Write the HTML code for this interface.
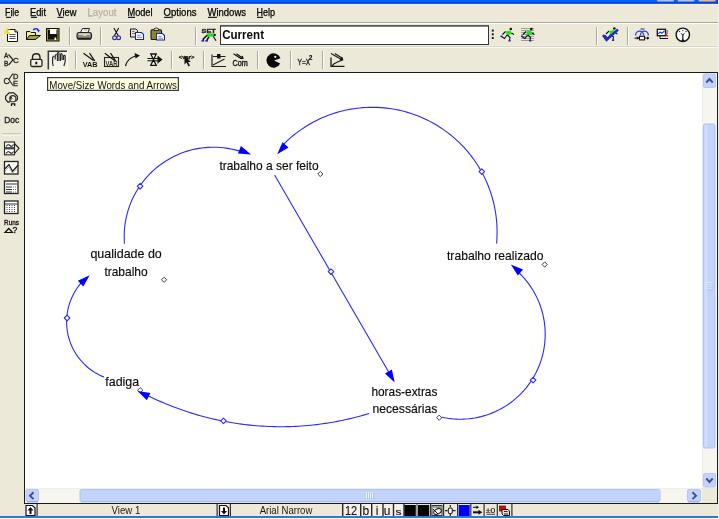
<!DOCTYPE html>
<html><head><meta charset="utf-8">
<style>
*{margin:0;padding:0;box-sizing:border-box}
html,body{width:719px;height:519px;overflow:hidden;background:#ece9d8;font-family:"Liberation Sans",sans-serif}
.a{position:absolute}
svg{position:absolute;left:0;top:0}
</style></head><body>
<svg style="will-change:transform" width="719" height="519" viewBox="0 0 719 519" font-family="Liberation Sans, sans-serif">
<rect x="0" y="0" width="719" height="519" fill="#ece9d8"/>
<!-- title bar remnant -->
<rect x="0" y="0" width="719" height="2" fill="#0062fc"/>
<rect x="0" y="2" width="719" height="1" fill="#0048dc"/>
<rect x="0" y="3" width="719" height="1" fill="#2a5ad0"/>
<rect x="0" y="4" width="719" height="1" fill="#f2efe2"/>
<rect x="657" y="0" width="17" height="1.6" rx="0.8" fill="#b3c2ea"/>
<rect x="677.5" y="0" width="17" height="1.6" rx="0.8" fill="#b3c2ea"/>
<rect x="698.5" y="0" width="17" height="1.6" rx="0.8" fill="#f0b090"/>
<!-- menu -->
<g font-size="10.2" fill="#000" stroke="#000" stroke-width="0.25">
<text x="5" y="16" textLength="14.2" lengthAdjust="spacingAndGlyphs">File</text>
<text x="30" y="16" textLength="16" lengthAdjust="spacingAndGlyphs">Edit</text>
<text x="56.5" y="16" textLength="20" lengthAdjust="spacingAndGlyphs">View</text>
<text x="87.5" y="16" textLength="29" lengthAdjust="spacingAndGlyphs" fill="#aca899" stroke="#c4c0b0">Layout</text>
<text x="127.5" y="16" textLength="25" lengthAdjust="spacingAndGlyphs">Model</text>
<text x="163.5" y="16" textLength="33" lengthAdjust="spacingAndGlyphs">Options</text>
<text x="207.5" y="16" textLength="38.5" lengthAdjust="spacingAndGlyphs">Windows</text>
<text x="256.5" y="16" textLength="18.5" lengthAdjust="spacingAndGlyphs">Help</text>
</g>
<g fill="#222">
<rect x="6" y="16.8" width="5" height="1.2"/><rect x="31" y="16.8" width="6" height="1.2"/><rect x="57.5" y="16.8" width="6" height="1.2"/>
<rect x="128" y="16.8" width="7" height="1.2"/><rect x="164" y="16.8" width="7" height="1.2"/><rect x="208" y="16.8" width="9" height="1.2"/><rect x="257" y="16.8" width="6" height="1.2"/>
</g>
<rect x="88" y="16" width="5" height="1" fill="#c8c4b4"/>
<rect x="0" y="22" width="719" height="1" fill="#aca899"/>
<rect x="0" y="23" width="719" height="1" fill="#fff"/>
<rect x="0" y="47" width="719" height="1" fill="#fbfaf4"/>
<rect x="0" y="46" width="719" height="1" fill="#d6d3c4"/>
<rect x="0" y="45" width="719" height="1" fill="#f0eee2"/>
<rect x="69" y="27" width="1" height="18" fill="#aca899"/><rect x="70" y="27" width="1" height="18" fill="#fff"/>
<rect x="100" y="27" width="1" height="18" fill="#aca899"/><rect x="101" y="27" width="1" height="18" fill="#fff"/>
<rect x="195" y="27" width="1" height="18" fill="#aca899"/><rect x="196" y="27" width="1" height="18" fill="#fff"/>
<rect x="596" y="27" width="1" height="18" fill="#aca899"/><rect x="597" y="27" width="1" height="18" fill="#fff"/>
<rect x="627" y="27" width="1" height="18" fill="#aca899"/><rect x="628" y="27" width="1" height="18" fill="#fff"/>
<!-- Current box -->
<rect x="220" y="25" width="269" height="20" fill="#333"/>
<rect x="221" y="26.6" width="267" height="17.4" fill="#fff"/>
<rect x="220" y="25" width="269" height="1" fill="#5a5a55"/>
<text x="222.2" y="38.8" font-size="12" font-weight="bold" fill="#0a0a0a" textLength="41.8" lengthAdjust="spacingAndGlyphs">Current</text>
<path d="M7.5,29.5 H15 L17.5,32 V41.5 H7.5 Z" fill="#fff" stroke="#111" stroke-width="1"/>
<path d="M15,29.5 V32 H17.5" fill="#ddd" stroke="#111" stroke-width="1"/>
<path d="M9.5,34.5 H15.5 M9.5,36.5 H15.5 M9.5,38.5 H15.5" stroke="#555" stroke-width="1"/>
<path d="M4.5,30.5 L10,33.5 M7,28.5 L7.5,34 M4.5,33.5 L9.5,29.5" stroke="#e8e020" stroke-width="1.3"/>
<path d="M26.5,31.5 H30 L31,32.5 H35.5 V39.5 H26.5 Z" fill="#f4ee7a" stroke="#111" stroke-width="1"/>
<path d="M26.5,39.5 L29.5,35.5 H40.5 L35.5,39.5 Z" fill="#a8a030" stroke="#111" stroke-width="1"/>
<path d="M33,30 Q36,27.5 38.5,30" fill="none" stroke="#1030ff" stroke-width="1.3"/><path d="M37,30 L40,30 L38.5,32.5 Z" fill="#1030ff"/>
<rect x="46.5" y="28.5" width="12.5" height="12.5" fill="#111" stroke="#111" stroke-width="1"/>
<rect x="47.5" y="29.5" width="10.5" height="10.5" fill="none" stroke="#a09a28" stroke-width="1"/>
<rect x="50" y="29" width="6.5" height="5" fill="#fff"/>
<rect x="54.5" y="37.5" width="1.7" height="2.5" fill="#fff"/>
<path d="M80.5,32.5 L82.5,28.5 H89.5 L88,32.5 Z" fill="#fafafa" stroke="#222" stroke-width="1"/>
<path d="M84,30 H87.5" stroke="#999" stroke-width="0.8"/>
<rect x="77" y="32.5" width="14.5" height="6.5" rx="2.2" fill="#8a8a8a" stroke="#222" stroke-width="1.1"/>
<rect x="78.5" y="33.3" width="11.5" height="1.6" fill="#d8d8d8"/>
<rect x="83" y="34.8" width="3.5" height="1.2" fill="#f0e040"/>
<rect x="77.5" y="37.8" width="13.5" height="1.8" fill="#1a1a1a"/>
<path d="M113.9,28 L118.2,35.8 M118.7,28 L114.4,35.8" stroke="#111" stroke-width="1.1"/>
<circle cx="114.6" cy="37.8" r="1.9" fill="none" stroke="#3030b0" stroke-width="1.2"/><circle cx="118.6" cy="37.8" r="1.9" fill="none" stroke="#3030b0" stroke-width="1.2"/>
<path d="M130.5,29 H136 L137.5,30.5 V37 H130.5 Z" fill="#e8e8e8" stroke="#111" stroke-width="1"/>
<path d="M132,31.5 H134.5 M132,33.5 H135.5" stroke="#555" stroke-width="0.8"/>
<path d="M135.5,32.5 H141.5 L143.5,34.5 V39.5 H135.5 Z" fill="#fff" stroke="#1c2a90" stroke-width="1.1"/>
<path d="M137.2,35.3 H140.5 M137.2,37.3 H142" stroke="#3a4aa0" stroke-width="0.7"/>
<rect x="151" y="29.8" width="10.5" height="9.7" rx="1" fill="#8c8630" stroke="#1a1a1a" stroke-width="1.1"/>
<path d="M154,30.5 V28.8 Q156.2,27 158.5,28.8 V30.5 Z" fill="#e8e8d8" stroke="#1a1a1a" stroke-width="0.9"/>
<path d="M156.5,33.5 H162.5 L164.5,35.5 V40 H156.5 Z" fill="#fff" stroke="#1c2a90" stroke-width="1.1"/>
<path d="M158.2,36.3 H161.5 M158.2,38.2 H163" stroke="#3a4aa0" stroke-width="0.7"/>
<text x="201.6" y="32.8" font-size="6" font-weight="bold" fill="#222" stroke="#222" stroke-width="0.35" textLength="14.2" lengthAdjust="spacingAndGlyphs">SET</text>
<path d="M206.5,33.8 L212.8,33.2 L213.4,36.6 L207.5,37 Z" fill="#10ee10"/>
<path d="M207.2,35.2 L203.5,38.8 L202.8,40.2 M209,37 L206.8,40" fill="none" stroke="#111" stroke-width="1.5"/>
<path d="M213.2,36.2 L216,40.8" stroke="#111" stroke-width="1.1"/>
<circle cx="214.6" cy="35" r="1.3" fill="#111"/>
<rect x="201.5" y="40" width="2.6" height="1.6" fill="#2020c0"/><rect x="205.3" y="40" width="2.6" height="1.6" fill="#2020c0"/>
<rect x="491.8" y="29.6" width="1.9" height="1.9" fill="#111"/>
<rect x="491.8" y="33.4" width="1.9" height="1.9" fill="#111"/>
<rect x="491.8" y="37.1" width="1.9" height="1.9" fill="#111"/>
<path d="M505.5,31.5 L510.5,30.5 L512,34 L507,35.5 Z" fill="#18e818"/><circle cx="510.8" cy="29" r="1.3" fill="#111"/><path d="M505.5,31.5 L502.5,34.5 M511.5,33 L514,34.5 M507,35 L504.5,38.5 L501.5,36.5 M507.5,35 L510,37.5 L509.5,40.5" fill="none" stroke="#111" stroke-width="1.1"/><rect x="500.5" y="35.5" width="2" height="1.6" fill="#2020c0"/><rect x="508.5" y="40" width="2.2" height="1.5" fill="#2020c0"/>
<rect x="521" y="28" width="13" height="1" fill="#9c9c9c"/>
<rect x="521" y="30" width="13" height="1" fill="#9c9c9c"/>
<rect x="521" y="32" width="13" height="1" fill="#9c9c9c"/>
<rect x="521" y="34" width="13" height="1" fill="#9c9c9c"/>
<rect x="521" y="36" width="13" height="1" fill="#9c9c9c"/>
<rect x="521" y="38" width="13" height="1" fill="#9c9c9c"/>
<rect x="521" y="40" width="13" height="1" fill="#9c9c9c"/>
<path d="M526.0,31.5 L531.0,30.5 L532.5,34 L527.5,35.5 Z" fill="#18e818"/><circle cx="531.3" cy="29" r="1.3" fill="#111"/><path d="M526.0,31.5 L523.0,34.5 M532.0,33 L534.5,34.5 M527.5,35 L525.0,38.5 L522.0,36.5 M528.0,35 L530.5,37.5 L530.0,40.5" fill="none" stroke="#111" stroke-width="1.1"/><rect x="521.0" y="35.5" width="2" height="1.6" fill="#2020c0"/><rect x="529.0" y="40" width="2.2" height="1.5" fill="#2020c0"/>
<path d="M609.0,31.0 L614.0,30.0 L615.5,33.5 L610.5,35.0 Z" fill="#18e818"/><circle cx="614.3" cy="28.5" r="1.3" fill="#111"/><path d="M609.0,31.0 L606.0,34.0 M615.0,32.5 L617.5,34.0 M610.5,34.5 L608.0,38.0 L605.0,36.0 M611.0,34.5 L613.5,37.0 L613.0,40.0" fill="none" stroke="#111" stroke-width="1.1"/><rect x="604.0" y="35.0" width="2" height="1.6" fill="#2020c0"/><rect x="612.0" y="39.5" width="2.2" height="1.5" fill="#2020c0"/>
<path d="M603,35 L606.5,40 L618,29.5" fill="none" stroke="#1c2ad8" stroke-width="2.4"/>
<path d="M635.6,35.5 A4,4.3 0 0 1 643.6,35.5 M640.4,35.5 A4,4.3 0 0 1 648.4,35.5" fill="none" stroke="#2a40e8" stroke-width="1.3"/>
<path d="M640.5,29 H644.5" stroke="#333" stroke-width="1"/>
<rect x="639.5" y="36.3" width="5" height="3.6" fill="#fff" stroke="#111" stroke-width="1.1"/>
<path d="M634.5,38.1 H639.5 M644.5,38.1 H649" stroke="#111" stroke-width="1"/><path d="M636.8,36.4 L639.3,38.1 L636.8,39.8 Z M647,36.4 L649.5,38.1 L647,39.8 Z" fill="#111"/>
<rect x="657.3" y="29.3" width="8.2" height="6.4" fill="#fff" stroke="#111" stroke-width="1.3"/>
<path d="M658.3,33.8 L660,32 L661.8,33.2 L664.5,31" fill="none" stroke="#1a3af0" stroke-width="1.1"/>
<path d="M660,38.5 H668 M660,36 V38.5" stroke="#111" stroke-width="1"/><path d="M665.5,34 L668,36.5" stroke="#e01818" stroke-width="1.3"/><rect x="666.5" y="30.5" width="1.5" height="1" fill="#333"/><rect x="666.5" y="32.5" width="1.5" height="1" fill="#333"/>
<circle cx="682.8" cy="34.8" r="6.7" fill="#fff" stroke="#111" stroke-width="1.4"/>
<path d="M682.8,34 V41" stroke="#111" stroke-width="1.2"/><path d="M681.3,41 L682.8,38.5 L684.3,41 Z" fill="#111"/>
<path d="M681,33 L682.8,35.5 L684.6,33" fill="none" stroke="#444" stroke-width="0.9"/>
<circle cx="679.6" cy="31.6" r="0.7" fill="#111"/><circle cx="682.8" cy="30.6" r="0.7" fill="#111"/><circle cx="686" cy="31.6" r="0.7" fill="#111"/>
<rect x="75" y="51" width="1" height="18" fill="#aca899"/><rect x="76" y="51" width="1" height="18" fill="#fff"/>
<rect x="171" y="51" width="1" height="18" fill="#aca899"/><rect x="172" y="51" width="1" height="18" fill="#fff"/>
<rect x="203" y="51" width="1" height="18" fill="#aca899"/><rect x="204" y="51" width="1" height="18" fill="#fff"/>
<rect x="257" y="51" width="1" height="18" fill="#aca899"/><rect x="258" y="51" width="1" height="18" fill="#fff"/>
<rect x="290" y="51" width="1" height="18" fill="#aca899"/><rect x="291" y="51" width="1" height="18" fill="#fff"/>
<rect x="322" y="51" width="1" height="18" fill="#aca899"/><rect x="323" y="51" width="1" height="18" fill="#fff"/>
<text x="4" y="58.2" font-size="6.5" fill="#222" stroke="#222" stroke-width="0.3">A</text><text x="4" y="66.2" font-size="6.5" fill="#222" stroke="#222" stroke-width="0.3">B</text>
<path d="M8.5,54.5 L13,59.8 L8.5,65" fill="none" stroke="#222" stroke-width="1.2"/>
<text x="13" y="63" font-size="8" fill="#222" stroke="#222" stroke-width="0.3">C</text>
<path d="M32.5,59.5 V57.5 Q32.5,53.8 36.3,53.8 Q40,53.8 40,57.5 V59.5" fill="none" stroke="#222" stroke-width="1.4"/>
<rect x="30.7" y="59.3" width="11.3" height="7.2" rx="1.5" fill="#f4f1e4" stroke="#222" stroke-width="1.3"/>
<rect x="35.3" y="61.8" width="2" height="2.5" fill="#111"/>
<rect x="48" y="51" width="20" height="19" fill="#f3f1e8"/>
<rect x="67.3" y="50.5" width="1" height="20" fill="#fbfaf5"/><rect x="47.5" y="69.5" width="21" height="1" fill="#fbfaf5"/>
<path d="M48.3,69.5 V51.2 H67" fill="none" stroke="#3a3a3a" stroke-width="1.5"/>
<path d="M53.2,66 L52.6,63 V57.5 L54.2,56 M55.2,59.5 V55.5 Q55.8,54.3 56.6,55 M57.4,61 V53.2 Q58.1,52 58.9,52.8 V61 M60.5,61 V54.2 Q61.3,53.1 62.1,54.2 V60 M63.6,60 V55.6 Q64.4,54.6 65.2,56 V61.5 L63.9,66" fill="none" stroke="#222" stroke-width="1.1"/>
<path d="M83.5,53.2 L93.5,60.5 M89.5,53.2 L94.8,61" fill="none" stroke="#111" stroke-width="1.2"/>
<text x="82.8" y="66.6" font-size="7.5" font-weight="bold" fill="#111" textLength="14.8" lengthAdjust="spacingAndGlyphs">VAB</text>
<rect x="104.5" y="57.5" width="14" height="9" fill="none" stroke="#222" stroke-width="1.1"/>
<text x="105.5" y="65.5" font-size="6.5" font-weight="bold" fill="#333" textLength="12" lengthAdjust="spacingAndGlyphs">VAR</text>
<path d="M104.8,53.2 L114.5,60.5 M110.5,53.2 L115.8,61" fill="none" stroke="#111" stroke-width="1.2"/>
<path d="M125.5,66 Q127,58.5 135.5,56" fill="none" stroke="#111" stroke-width="1.3"/><path d="M140,55.6 L134.5,53 L135.5,58.5 Z" fill="#111"/>
<path d="M147.5,58.5 H158 M147.5,60.8 H158" stroke="#111" stroke-width="1"/>
<path d="M150.8,54 H156.2 L153.5,59.6 Z M150.8,65.3 H156.2 L153.5,59.6 Z" fill="#fff" stroke="#111" stroke-width="1.3"/>
<path d="M157.5,55.5 L162.5,59.6 L157.5,63.8 Z" fill="#111"/>
<text x="178.8" y="58.6" font-size="6" font-weight="bold" fill="#111" stroke="#111" stroke-width="0.25" textLength="15.5" lengthAdjust="spacingAndGlyphs">&lt;var&gt;</text>
<path d="M184.5,55.5 L184.5,64.5 L186.5,62.5 L188.5,66.5 L190,65.8 L188,62 L190.8,62 Z" fill="#111"/>
<path d="M212,54.5 V66.5 H226 M213,56.5 H225.5 M213,65 L224.5,59" fill="none" stroke="#222" stroke-width="1.2"/>
<rect x="217" y="54" width="3.5" height="4.5" fill="#111"/>
<path d="M233.5,53.8 L240.5,58.3 M236.5,53.8 L242.5,58 M240,58.5 L243,58.5 L242.3,55.8" fill="none" stroke="#111" stroke-width="1.15"/>
<text x="232.6" y="66" font-size="8.6" fill="#111" stroke="#111" stroke-width="0.35" textLength="15.3" lengthAdjust="spacingAndGlyphs">Com</text>
<path d="M280.5,58.3 A7.2,7.2 0 1 0 280.2,63.5 L274,60.5 Z" fill="#0a0a0a"/>
<circle cx="275.3" cy="56.8" r="1.1" fill="#fff"/>
<text x="297.6" y="64.5" font-size="9" fill="#1a1a1a" stroke="#1a1a1a" stroke-width="0.35" textLength="12.6" lengthAdjust="spacingAndGlyphs">Y=X</text>
<text x="308.8" y="60" font-size="6.5" font-weight="bold" fill="#111" stroke="#111" stroke-width="0.2">2</text>
<path d="M331,57.5 V66.3 H344.5" fill="none" stroke="#1a1a1a" stroke-width="1.3"/>
<path d="M331,53.5 L341.5,59.5 M334.8,53.5 L342.8,58.5 M342.5,60 Q338,61.5 334,63.8 L332.2,66" fill="none" stroke="#1a1a1a" stroke-width="1.2"/>
<path d="M343.5,60.3 L339.3,60.5 L342,56.8 Z" fill="#111"/>
<text x="3.4" y="83.5" font-size="8.5" fill="#222" stroke="#222" stroke-width="0.3">C</text>
<path d="M13,73.5 L8.8,79.5 L13,85.5" fill="none" stroke="#222" stroke-width="1.1"/>
<text x="13" y="79" font-size="7.5" fill="#222" stroke="#222" stroke-width="0.3">D</text><text x="13" y="86.3" font-size="7.5" fill="#222" stroke="#222" stroke-width="0.3">E</text>
<path d="M7.8,102 L5.6,99.4 V96.3 L9.1,92.8 H13.8 L17.4,96.3 V99.4 L15.4,101.2" fill="none" stroke="#222" stroke-width="1.2"/>
<circle cx="12.8" cy="98.7" r="3.1" fill="none" stroke="#333" stroke-width="1.1"/>
<path d="M10,97 L12,96.8 L10.8,100 Z" fill="#111"/><path d="M7,102.8 L9.8,100.8 L9.8,102.8 Z" fill="#111"/>
<path d="M8.5,102 L12.5,98" stroke="#555" stroke-width="0.9"/>
<path d="M11.5,106 V103.8 H14.8 V106" fill="none" stroke="#111" stroke-width="1.2"/>
<text x="4.2" y="123" font-size="9" fill="#222" stroke="#222" stroke-width="0.35" textLength="15" lengthAdjust="spacingAndGlyphs">Doc</text>
<rect x="2.5" y="133.5" width="18.5" height="1" fill="#aca899"/><rect x="2.5" y="134.5" width="18.5" height="1" fill="#fff"/>
<rect x="4.5" y="142" width="10" height="5.8" fill="#fff" stroke="#222" stroke-width="1.1"/><rect x="4.5" y="148.8" width="10" height="6" fill="#fff" stroke="#222" stroke-width="1.1"/>
<path d="M6,146.5 Q8,143.5 10,145.5 T13.5,144.5 M6,153.5 Q8,150.5 10,152.5 T13.5,151.5" fill="none" stroke="#222" stroke-width="1.1"/>
<path d="M14.5,143.5 L19,148.3 L14.5,153.5" fill="none" stroke="#222" stroke-width="1.1"/>
<rect x="4.5" y="161.5" width="13.5" height="12.5" fill="#fff" stroke="#222" stroke-width="1.3"/>
<path d="M5,168.8 L9,164.5 L12.5,171.3 L18,165.3" fill="none" stroke="#222" stroke-width="1.3"/>
<path d="M5,171 L9,167 L12.5,173.3 L17.5,168" fill="none" stroke="#999" stroke-width="0.8"/>
<rect x="4.5" y="181" width="13.5" height="12.5" fill="#fff" stroke="#222" stroke-width="1.3"/>
<path d="M6,184 H17 M6,187 H12 M6,189.5 H12 M6,192 H12" stroke="#333" stroke-width="1"/>
<path d="M13,187 H17 M13,189.5 H17 M13,192 H17" stroke="#666" stroke-width="1" stroke-dasharray="1,1"/>
<rect x="4.5" y="201" width="13.5" height="12.5" fill="#fff" stroke="#222" stroke-width="1.3"/>
<path d="M5,204 H17.5" stroke="#333" stroke-width="1"/>
<path d="M7,205 V213 M9.5,205 V213 M12,205 V213 M14.5,205 V213" stroke="#444" stroke-width="1" stroke-dasharray="1,1"/>
<text x="4" y="225" font-size="7.5" fill="#111" stroke="#111" stroke-width="0.3" textLength="15" lengthAdjust="spacingAndGlyphs">Runs</text>
<path d="M5,232.5 L8.8,228.5 L12.5,232.5 Z" fill="none" stroke="#111" stroke-width="1.2"/>
<text x="12.5" y="233.3" font-size="8.5" fill="#111" stroke="#111" stroke-width="0.3">?</text>
<!-- canvas -->
<rect x="24" y="72" width="694" height="432" fill="#1a1a1a"/>
<rect x="25" y="73" width="692" height="430" fill="#fff"/>
<rect x="702" y="73" width="15" height="415" fill="#f6f5ef"/>
<rect x="702" y="73" width="1" height="415" fill="#eeede5"/>
<rect x="703.5" y="74" width="12" height="13.5" rx="1.5" fill="#c3d3fb" stroke="#b4c6f6" stroke-width="1"/>
<path d="M706.3,82.5 L709.5,79 L712.7,82.5" fill="none" stroke="#3f4f8c" stroke-width="1.9"/>
<rect x="703.5" y="124" width="11.5" height="324" rx="1.5" fill="#c3d4fc" stroke="#b0c4f4" stroke-width="1"/>
<rect x="704.5" y="125" width="3" height="322" fill="#cfdcfd"/>
<rect x="705.5" y="282.5" width="7" height="1" fill="#eef3fe"/><rect x="706.5" y="283.5" width="7" height="0.8" fill="#a0b6f0"/>
<rect x="705.5" y="284.5" width="7" height="1" fill="#eef3fe"/><rect x="706.5" y="285.5" width="7" height="0.8" fill="#a0b6f0"/>
<rect x="705.5" y="286.5" width="7" height="1" fill="#eef3fe"/><rect x="706.5" y="287.5" width="7" height="0.8" fill="#a0b6f0"/>
<rect x="705.5" y="288.5" width="7" height="1" fill="#eef3fe"/><rect x="706.5" y="289.5" width="7" height="0.8" fill="#a0b6f0"/>
<rect x="703.5" y="473.5" width="12" height="13.5" rx="1.5" fill="#c3d3fb" stroke="#b4c6f6" stroke-width="1"/>
<path d="M706.3,478.5 L709.5,482 L712.7,478.5" fill="none" stroke="#3f4f8c" stroke-width="1.9"/>
<rect x="25" y="488" width="677" height="15" fill="#f6f5ef"/>
<rect x="25" y="488" width="677" height="1" fill="#f0efe6"/>
<rect x="26" y="489.5" width="12.5" height="12" rx="1.5" fill="#c3d3fb" stroke="#b4c6f6" stroke-width="1"/>
<rect x="27" y="501.2" width="11" height="1.2" fill="#90a8e8"/>
<path d="M33.5,492.3 L30,495.7 L33.5,499.1" fill="none" stroke="#3f4f8c" stroke-width="1.9"/>
<rect x="80" y="489.5" width="580" height="12" rx="1.5" fill="#c3d4fc" stroke="#b0c4f4" stroke-width="1"/>
<rect x="81" y="501.2" width="578" height="1.2" fill="#a8bcf0"/>
<rect x="366" y="492.5" width="1" height="6" fill="#eef3fe"/><rect x="367" y="493" width="0.8" height="6" fill="#a8bcf2"/>
<rect x="368" y="492.5" width="1" height="6" fill="#eef3fe"/><rect x="369" y="493" width="0.8" height="6" fill="#a8bcf2"/>
<rect x="370" y="492.5" width="1" height="6" fill="#eef3fe"/><rect x="371" y="493" width="0.8" height="6" fill="#a8bcf2"/>
<rect x="372" y="492.5" width="1" height="6" fill="#eef3fe"/><rect x="373" y="493" width="0.8" height="6" fill="#a8bcf2"/>
<rect x="687.5" y="489.5" width="13" height="12" rx="1.5" fill="#c3d3fb" stroke="#b4c6f6" stroke-width="1"/>
<rect x="688.5" y="501.2" width="11" height="1.2" fill="#90a8e8"/>
<path d="M692.5,492.3 L696,495.7 L692.5,499.1" fill="none" stroke="#3f4f8c" stroke-width="1.9"/>
<rect x="702" y="488" width="15" height="15" fill="#ece9d8"/>
<!-- tooltip -->
<rect x="47.6" y="77.6" width="130.8" height="12.8" fill="#ffffe1" stroke="#3a3a3a" stroke-width="1.2"/>
<text x="49.3" y="88.7" font-size="11" fill="#111" textLength="127.5" lengthAdjust="spacingAndGlyphs">Move/Size Words and Arrows</text>
<polyline points="124.50,243.79 124.30,240.77 124.21,237.75 124.22,234.73 124.33,231.70 124.54,228.69 124.86,225.68 125.28,222.68 125.79,219.70 126.41,216.74 127.13,213.81 127.95,210.89 128.87,208.01 129.88,205.16 130.99,202.35 132.19,199.57 133.49,196.84 134.88,194.16 136.36,191.52 137.92,188.93 139.58,186.40 141.32,183.92 143.14,181.51 145.04,179.16 147.02,176.87 149.08,174.66 151.21,172.51 153.41,170.44 155.69,168.44 158.02,166.52 160.42,164.68 162.89,162.93 165.41,161.26 167.98,159.67 170.61,158.17 173.29,156.77 176.01,155.45 178.78,154.23 181.58,153.10 184.43,152.07 187.30,151.13 190.21,150.29 193.14,149.55 196.10,148.91 199.07,148.37 202.06,147.94 205.07,147.60 208.08,147.36 211.11,147.23 214.13,147.20 217.15,147.27 220.17,147.45 223.19,147.73 226.19,148.11 229.17,148.59 232.14,149.17 235.09,149.85 238.01,150.63 240.90,151.51" fill="none" stroke="#2a2aff" stroke-width="1.1"/>
<polyline points="496.58,243.53 496.82,240.52 496.98,237.51 497.08,234.50 497.10,231.49 497.05,228.48 496.92,225.46 496.73,222.46 496.46,219.46 496.12,216.46 495.70,213.48 495.22,210.50 494.66,207.54 494.03,204.60 493.33,201.66 492.56,198.75 491.72,195.86 490.81,192.98 489.83,190.14 488.79,187.31 487.67,184.51 486.49,181.74 485.24,179.00 483.92,176.29 482.54,173.61 481.10,170.96 479.59,168.35 478.02,165.78 476.39,163.25 474.70,160.76 472.94,158.30 471.13,155.90 469.26,153.53 467.34,151.21 465.36,148.94 463.32,146.72 461.24,144.55 459.10,142.43 456.91,140.36 454.67,138.34 452.38,136.38 450.04,134.47 447.66,132.63 445.24,130.83 442.78,129.10 440.27,127.43 437.72,125.82 435.14,124.27 432.51,122.79 429.86,121.37 427.17,120.01 424.45,118.72 421.69,117.49 418.91,116.33 416.10,115.24 413.27,114.22 410.41,113.26 407.53,112.38 404.63,111.56 401.71,110.81 398.77,110.14 395.82,109.54 392.85,109.00 389.88,108.54 386.89,108.16 383.89,107.84 380.89,107.60 377.88,107.42 374.87,107.33 371.86,107.30 368.84,107.35 365.83,107.47 362.82,107.66 359.82,107.93 356.83,108.26 353.84,108.67 350.87,109.15 347.91,109.71 344.96,110.33 342.03,111.03 339.11,111.79 336.22,112.63 333.34,113.54 330.49,114.51 327.67,115.55 324.87,116.67 322.09,117.84 319.35,119.09 316.64,120.40 313.96,121.78 311.31,123.22 308.70,124.72 306.12,126.29 303.59,127.92 301.09,129.61 298.64,131.36 296.23,133.16 293.86,135.03 291.54,136.95 289.27,138.93 287.04,140.96 284.87,143.05 282.74,145.18" fill="none" stroke="#2a2aff" stroke-width="1.1"/>
<polyline points="441.72,417.17 444.69,417.77 447.69,418.27 450.70,418.67 453.73,418.95 456.76,419.13 459.79,419.20 462.83,419.16 465.87,419.01 468.89,418.75 471.91,418.39 474.91,417.92 477.89,417.34 480.85,416.65 483.78,415.86 486.68,414.97 489.55,413.97 492.38,412.87 495.17,411.67 497.92,410.37 500.62,408.98 503.26,407.48 505.85,405.90 508.38,404.22 510.86,402.46 513.26,400.60 515.60,398.67 517.87,396.64 520.06,394.54 522.18,392.37 524.22,390.12 526.18,387.79 528.05,385.40 529.83,382.94 531.53,380.43 533.14,377.85 534.65,375.21 536.07,372.53 537.39,369.79 538.61,367.01 539.73,364.19 540.75,361.33 541.67,358.43 542.49,355.51 543.19,352.56 543.80,349.58 544.29,346.58 544.68,343.57 544.96,340.55 545.14,337.51 545.20,334.48 545.16,331.44 545.00,328.41 544.74,325.38 544.37,322.37 543.90,319.37 543.31,316.38 542.62,313.43 541.83,310.50 540.93,307.59 539.93,304.73 538.82,301.90 537.62,299.11 536.32,296.37 534.92,293.67 533.42,291.03 531.83,288.44 530.15,285.91 528.38,283.44 526.52,281.04 524.58,278.70 522.56,276.44 520.45,274.25 518.27,272.13" fill="none" stroke="#2a2aff" stroke-width="1.1"/>
<polyline points="369.27,413.42 366.40,414.28 363.51,415.13 360.62,415.94 357.72,416.72 354.81,417.47 351.89,418.20 348.97,418.89 346.04,419.56 343.10,420.19 340.16,420.80 337.21,421.38 334.25,421.93 331.29,422.45 328.33,422.93 325.36,423.39 322.38,423.82 319.40,424.22 316.42,424.59 313.44,424.93 310.45,425.24 307.46,425.52 304.46,425.78 301.46,426.00 298.46,426.19 295.46,426.35 292.46,426.48 289.46,426.58 286.45,426.65 283.45,426.69 280.44,426.70 277.44,426.68 274.43,426.63 271.43,426.55 268.43,426.44 265.42,426.30 262.42,426.13 259.43,425.93 256.43,425.70 253.44,425.44 250.44,425.15 247.46,424.83 244.47,424.48 241.49,424.11 238.51,423.70 235.54,423.26 232.57,422.79 229.61,422.29 226.65,421.76 223.70,421.21 220.75,420.62 217.81,420.00 214.87,419.36 211.94,418.68 209.02,417.98 206.11,417.25 203.20,416.48 200.30,415.69 197.41,414.87 194.53,414.02 191.65,413.15 188.79,412.24 185.93,411.30 183.09,410.34 180.25,409.35 177.42,408.33 174.61,407.28 171.80,406.20 169.01,405.10 166.22,403.97 163.45,402.81 160.69,401.62 157.94,400.40 155.21,399.16 152.48,397.89 149.77,396.59 147.07,395.27" fill="none" stroke="#2a2aff" stroke-width="1.1"/>
<polyline points="103.97,377.07 101.21,375.88 98.51,374.56 95.88,373.10 93.33,371.51 90.86,369.79 88.48,367.95 86.20,365.99 84.02,363.92 81.94,361.74 79.98,359.46 78.14,357.08 76.42,354.62 74.83,352.06 73.37,349.44 72.04,346.74 70.85,343.97 69.81,341.15 68.90,338.28 68.15,335.37 67.54,332.43 67.08,329.46 66.78,326.46 66.62,323.46 66.62,320.45 66.77,317.45 67.07,314.46 67.52,311.48 68.12,308.54 68.87,305.62 69.77,302.75 70.81,299.93 71.99,297.17 73.32,294.47 74.77,291.83 76.36,289.28 78.07,286.81 79.91,284.43 81.87,282.14" fill="none" stroke="#2a2aff" stroke-width="1.1"/>
<path d="M274.6,175.0 L389.4,373.3" stroke="#2a2aff" stroke-width="1.1"/>
<path d="M137.3,186.2 L140.1,183.4 L142.9,186.2 L140.1,189.0 Z" fill="#fff" stroke="#2a2aff" stroke-width="1.1" stroke-linejoin="round"/>
<path d="M479.0,171.6 L481.8,168.8 L484.6,171.6 L481.8,174.4 Z" fill="#fff" stroke="#2a2aff" stroke-width="1.1" stroke-linejoin="round"/>
<path d="M328.2,271.7 L331.0,268.9 L333.8,271.7 L331.0,274.5 Z" fill="#fff" stroke="#2a2aff" stroke-width="1.1" stroke-linejoin="round"/>
<path d="M530.3,380.1 L533.1,377.3 L535.9,380.1 L533.1,382.9 Z" fill="#fff" stroke="#2a2aff" stroke-width="1.1" stroke-linejoin="round"/>
<path d="M220.7,420.9 L223.5,418.1 L226.3,420.9 L223.5,423.7 Z" fill="#fff" stroke="#2a2aff" stroke-width="1.1" stroke-linejoin="round"/>
<path d="M64.3,318.0 L67.1,315.2 L69.9,318.0 L67.1,320.8 Z" fill="#fff" stroke="#2a2aff" stroke-width="1.1" stroke-linejoin="round"/>
<path d="M317.7,174.0 L320.3,171.4 L322.9,174.0 L320.3,176.6 Z" fill="#fff" stroke="#333" stroke-width="0.95" stroke-linejoin="round"/>
<path d="M161.5,279.8 L164.1,277.2 L166.7,279.8 L164.1,282.4 Z" fill="#fff" stroke="#333" stroke-width="0.95" stroke-linejoin="round"/>
<path d="M542.1,264.5 L544.7,261.9 L547.3,264.5 L544.7,267.1 Z" fill="#fff" stroke="#333" stroke-width="0.95" stroke-linejoin="round"/>
<path d="M137.6,390.2 L140.2,387.6 L142.8,390.2 L140.2,392.8 Z" fill="#fff" stroke="#333" stroke-width="0.95" stroke-linejoin="round"/>
<path d="M436.6,417.7 L439.2,415.1 L441.8,417.7 L439.2,420.3 Z" fill="#fff" stroke="#333" stroke-width="0.95" stroke-linejoin="round"/>
<polygon points="251.1,154.4 238.0,153.6 240.9,146.1" fill="#0000ff"/>
<polygon points="277.2,154.2 282.5,142.2 288.5,147.5" fill="#0000ff"/>
<polygon points="510.8,264.6 523.0,269.5 517.9,275.6" fill="#0000ff"/>
<polygon points="137.5,390.9 150.4,393.1 146.8,400.2" fill="#0000ff"/>
<polygon points="89.7,275.2 83.3,286.6 77.8,280.8" fill="#0000ff"/>
<polygon points="394.7,382.4 385.0,373.6 391.9,369.6" fill="#0000ff"/>
<text x="219.4" y="169.7" textLength="99.2" lengthAdjust="spacingAndGlyphs" font-size="13" fill="#0a0a0a" stroke="#0a0a0a" stroke-width="0.15">trabalho a ser feito</text>
<text x="90.4" y="258.1" textLength="71.4" lengthAdjust="spacingAndGlyphs" font-size="13" fill="#0a0a0a" stroke="#0a0a0a" stroke-width="0.15">qualidade do</text>
<text x="104.4" y="275.9" textLength="43.3" lengthAdjust="spacingAndGlyphs" font-size="13" fill="#0a0a0a" stroke="#0a0a0a" stroke-width="0.15">trabalho</text>
<text x="447.0" y="259.9" textLength="96.5" lengthAdjust="spacingAndGlyphs" font-size="13" fill="#0a0a0a" stroke="#0a0a0a" stroke-width="0.15">trabalho realizado</text>
<text x="105.3" y="385.5" textLength="33.8" lengthAdjust="spacingAndGlyphs" font-size="13" fill="#0a0a0a" stroke="#0a0a0a" stroke-width="0.15">fadiga</text>
<text x="371.4" y="395.5" textLength="66.0" lengthAdjust="spacingAndGlyphs" font-size="13" fill="#0a0a0a" stroke="#0a0a0a" stroke-width="0.15">horas-extras</text>
<text x="372.5" y="413.2" textLength="64.9" lengthAdjust="spacingAndGlyphs" font-size="13" fill="#0a0a0a" stroke="#0a0a0a" stroke-width="0.15">necessárias</text>
<!-- status bar -->
<path d="M26.0,505.5 H32.5 L35.0,508 V515.5 H26.0 Z" fill="#fff" stroke="#111" stroke-width="1.2"/><path d="M30.5,507 L33.5,510.5 H31.5 V514 H29.5 V510.5 H27.5 Z" fill="#111"/>
<rect x="36.5" y="504" width="1.2" height="12" fill="#333"/>
<text x="111.5" y="514" font-size="10.2" fill="#1a1a1a" textLength="28.8" lengthAdjust="spacingAndGlyphs">View 1</text>
<rect x="216.5" y="504" width="1.2" height="12" fill="#333"/>
<path d="M219.5,505.5 H226 L228.5,508 V515.5 H219.5 Z" fill="#fff" stroke="#111" stroke-width="1.2"/><path d="M224,514.5 L227,511 H225 V507.5 H223 V511 H221 Z" fill="#111"/>
<rect x="229.8" y="504" width="1.2" height="12" fill="#333"/>
<text x="259.7" y="514" font-size="10.2" fill="#1a1a1a" textLength="52.6" lengthAdjust="spacingAndGlyphs">Arial Narrow</text>
<rect x="343.2" y="504" width="16.8" height="12" fill="#f3f1e7"/>
<rect x="342" y="503.5" width="1.4" height="12.5" fill="#2a2a2a"/>
<text x="345.0" y="514.6" font-size="12" fill="#111" stroke="#111" stroke-width="0.1" textLength="12.2" lengthAdjust="spacingAndGlyphs">12</text>
<rect x="361.2" y="504" width="9.8" height="12" fill="#f3f1e7"/>
<rect x="360" y="503.5" width="1.4" height="12.5" fill="#2a2a2a"/>
<text x="362.4" y="514.6" font-size="12" fill="#111" stroke="#111" stroke-width="0.1" textLength="6.7" lengthAdjust="spacingAndGlyphs">b</text>
<rect x="372.2" y="504" width="10.100000000000012" height="12" fill="#f3f1e7"/>
<rect x="371" y="503.5" width="1.4" height="12.5" fill="#2a2a2a"/>
<text x="375.8" y="514.6" font-size="12" fill="#111" stroke="#111" stroke-width="0.1">i</text>
<rect x="383.5" y="504" width="9.3" height="12" fill="#f3f1e7"/>
<rect x="382.3" y="503.5" width="1.4" height="12.5" fill="#2a2a2a"/>
<text x="383.79999999999995" y="514.6" font-size="12" fill="#111" stroke="#111" stroke-width="0.1" textLength="6.600000000000034" lengthAdjust="spacingAndGlyphs">u</text>
<rect x="394.0" y="504" width="9.3" height="12" fill="#f3f1e7"/>
<rect x="392.8" y="503.5" width="1.4" height="12.5" fill="#2a2a2a"/>
<text x="395.4" y="514.6" font-size="9.5" fill="#111" stroke="#111" stroke-width="0.1" textLength="6.0000000000000115" lengthAdjust="spacingAndGlyphs">s</text>
<rect x="403.3" y="503.5" width="1.4" height="12.5" fill="#2a2a2a"/>
<rect x="404.5" y="505" width="11.3" height="11" fill="#050505"/>
<rect x="416.5" y="504" width="1" height="12" fill="#555"/>
<rect x="418" y="505" width="11.2" height="11" fill="#050505"/>
<rect x="430" y="504" width="1.2" height="12" fill="#333"/>
<rect x="432" y="505.5" width="10" height="10" fill="#f4f2ea" stroke="#333" stroke-width="1"/><rect x="432.5" y="506" width="9" height="2" fill="#999"/>
<ellipse cx="437.5" cy="511.5" rx="4" ry="2.6" transform="rotate(-25 437.5 511.5)" fill="none" stroke="#222" stroke-width="1.1"/>
<path d="M433,509 L438,514" stroke="#111" stroke-width="1"/>
<rect x="443" y="504" width="1.2" height="12" fill="#333"/>
<rect x="448.3" y="508" width="4" height="5.5" rx="1.5" fill="#fff" stroke="#222" stroke-width="1.1"/>
<path d="M445,510.7 H447.5 M453,510.7 H455.5 M450.3,505 V507.3 M450.3,514 V516" stroke="#222" stroke-width="1.2"/>
<rect x="457" y="504" width="1.2" height="12" fill="#333"/>
<rect x="458.7" y="505" width="11" height="11" fill="#0000f4"/>
<rect x="470.2" y="504" width="1.2" height="12" fill="#333"/>
<path d="M473,507.3 H477.5" stroke="#111" stroke-width="1.1"/><path d="M476.5,505.5 L479,507.3 L476.5,509.1 Z" fill="#111"/>
<path d="M473,512.3 H479" stroke="#111" stroke-width="2"/><path d="M478.5,509.8 L482.3,512.3 L478.5,514.8 Z" fill="#111"/>
<rect x="483.5" y="504" width="1.2" height="12" fill="#333"/>
<text x="485.8" y="512.5" font-size="8" fill="#222" stroke="#222" stroke-width="0.2" textLength="9.5" lengthAdjust="spacingAndGlyphs">±0</text>
<path d="M486.5,514.3 H495" stroke="#333" stroke-width="0.9"/>
<rect x="496.7" y="504" width="1.2" height="12" fill="#333"/>
<rect x="499.5" y="506" width="6" height="5" fill="#f00000" stroke="#222" stroke-width="0.7"/>
<path d="M502,509.5 H508 L509.5,511 V515.5 H503.5 L502,514 Z" fill="#ddd" stroke="#111" stroke-width="1"/>
<path d="M504,511.5 H507.5 M505,513 V515 M507,513 V515" stroke="#111" stroke-width="0.9"/>
<rect x="511.3" y="504" width="1.2" height="12" fill="#333"/>
<rect x="0" y="516" width="719" height="1" fill="#3a74d0"/><rect x="0" y="517" width="719" height="1" fill="#2a78e0"/>
<rect x="0" y="518" width="719" height="1" fill="#fafcff"/>
<rect x="718" y="0" width="1" height="519" fill="#f3f2ec"/>
<rect x="717" y="0" width="1" height="4" fill="#0040c8"/>
</svg>
</body></html>
